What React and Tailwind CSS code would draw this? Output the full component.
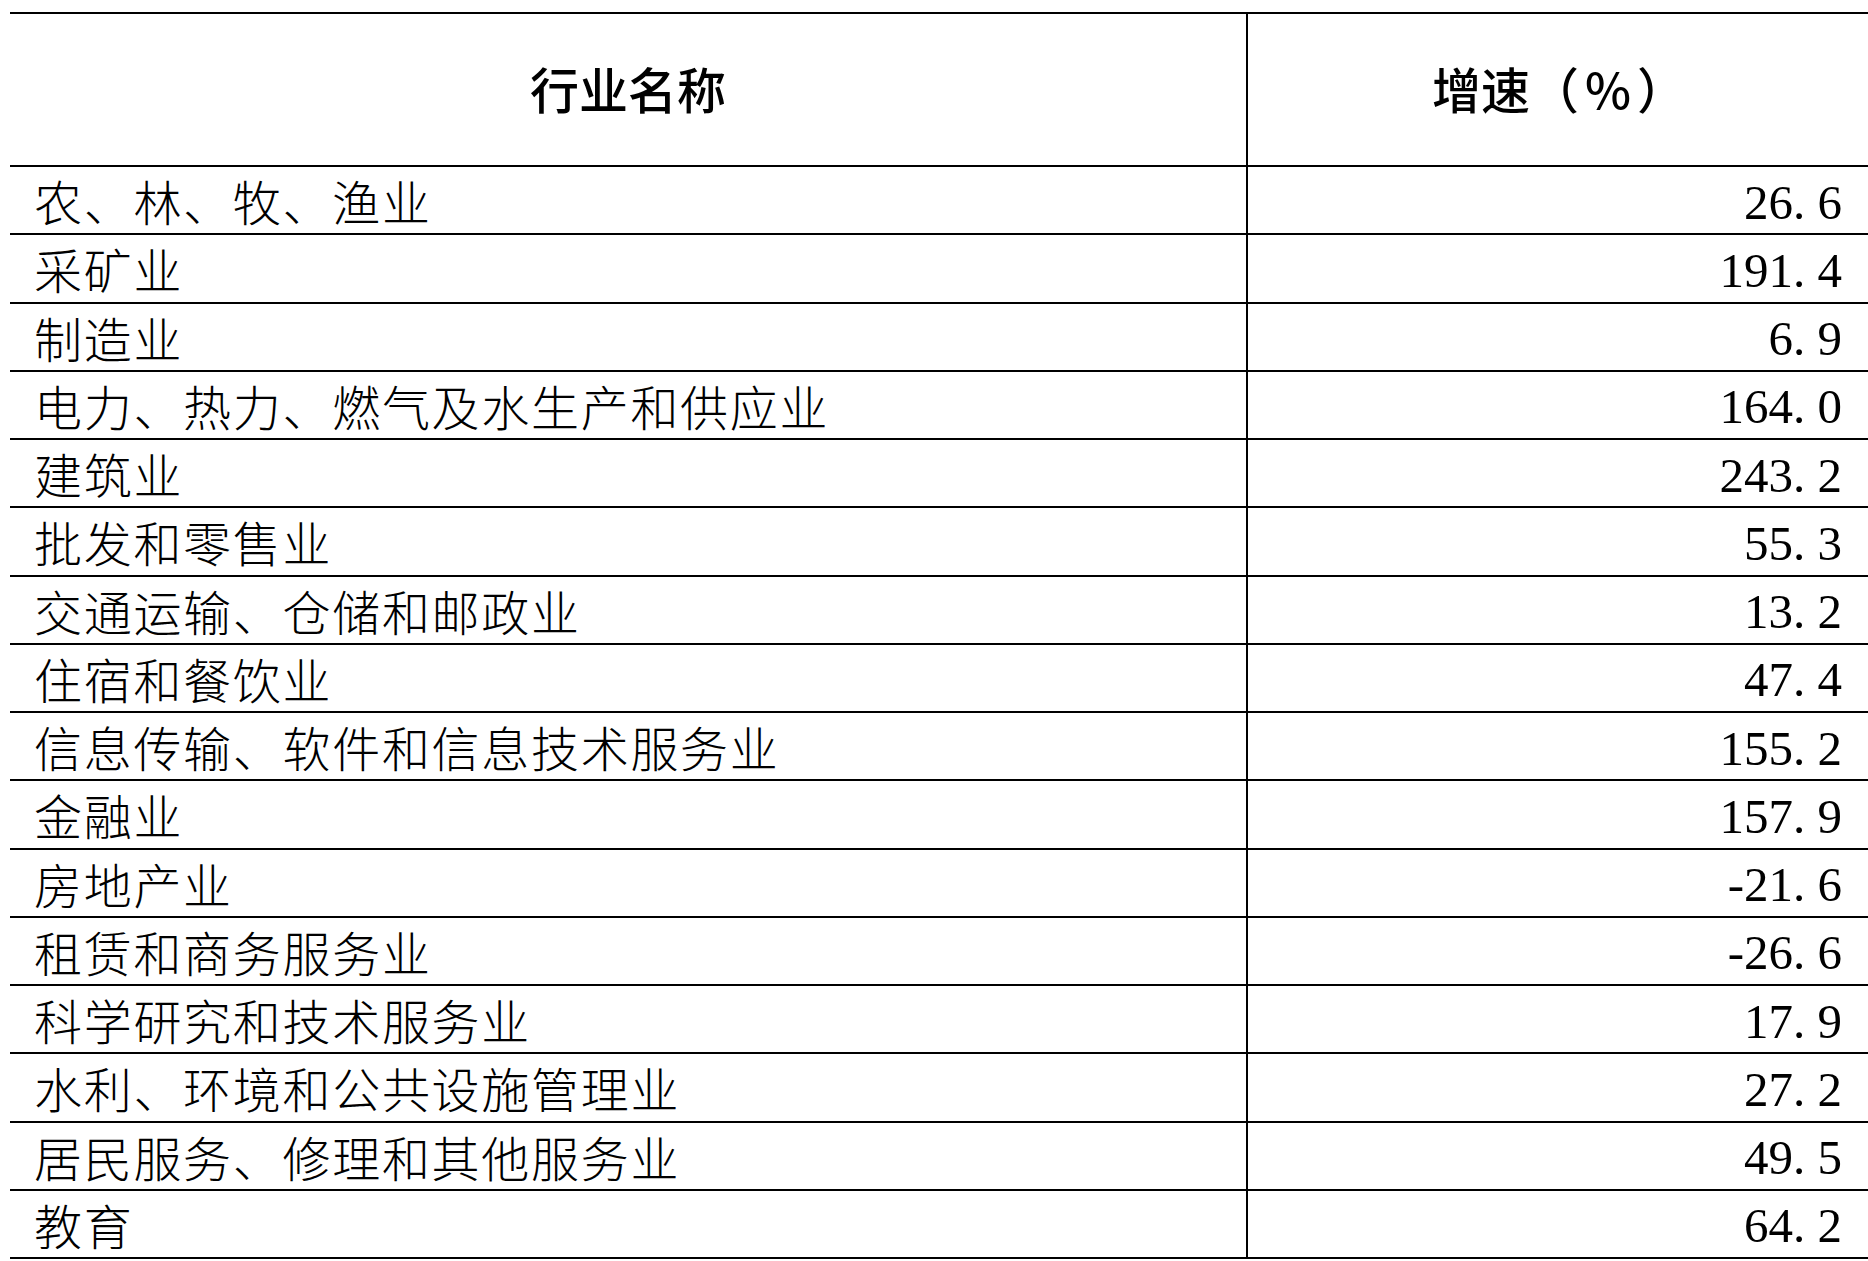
import React from "react";

const rows = [
  ["农、林、牧、渔业", "26.6"],
  ["采矿业", "191.4"],
  ["制造业", "6.9"],
  ["电力、热力、燃气及水生产和供应业", "164.0"],
  ["建筑业", "243.2"],
  ["批发和零售业", "55.3"],
  ["交通运输、仓储和邮政业", "13.2"],
  ["住宿和餐饮业", "47.4"],
  ["信息传输、软件和信息技术服务业", "155.2"],
  ["金融业", "157.9"],
  ["房地产业", "-21.6"],
  ["租赁和商务服务业", "-26.6"],
  ["科学研究和技术服务业", "17.9"],
  ["水利、环境和公共设施管理业", "27.2"],
  ["居民服务、修理和其他服务业", "49.5"],
  ["教育", "64.2"],
];

function Num({ v }) {
  const [a, b] = v.split(".");
  return (
    <span className="whitespace-nowrap">
      {a}
      <span className="inline-block w-[0.5em]">.</span>
      {b}
    </span>
  );
}

export default function App() {
  return (
    <div className="w-[1868px] h-[1261px] bg-white pt-[12px] pl-[10px] overflow-hidden">
      <div className="grid grid-cols-[1238px_1fr] border-t-2 border-black text-black">
        <div className="h-[153px] border-b-2 border-r-2 border-black flex items-center justify-center text-[49px] font-medium leading-none font-['Noto_Sans_CJK_SC',sans-serif] pb-[4px]">
          行业名称
        </div>
        <div className="h-[153px] border-b-2 border-black flex items-center justify-center pl-[2px] text-[49px] font-medium leading-none font-['Noto_Sans_CJK_SC',sans-serif] pb-[4px]">
          增速（<span className="px-[6px]">%</span>）
        </div>
        {rows.map(([name, val]) => (
          <React.Fragment key={name}>
            <div className="h-[68.25px] border-b-2 border-r-2 border-black flex items-center pl-[24px] text-[48px] tracking-[1.7px] leading-none font-['Noto_Sans_CJK_SC',sans-serif] font-light whitespace-nowrap">
              {name}
            </div>
            <div className="h-[68.25px] border-b-2 border-black flex items-center justify-end pr-[26px] text-[49px] leading-none font-['Liberation_Serif',serif] pt-[4px]">
              <Num v={val} />
            </div>
          </React.Fragment>
        ))}
      </div>
    </div>
  );
}
